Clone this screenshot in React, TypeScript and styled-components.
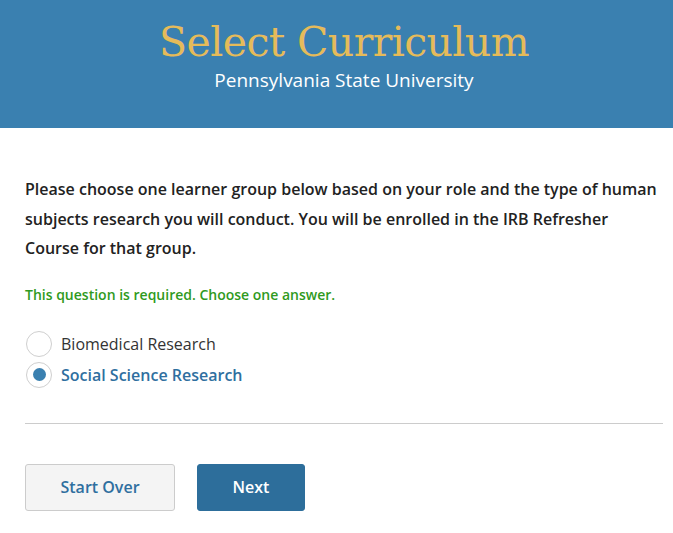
import React, { useState } from "react";
import styled, { createGlobalStyle } from "styled-components";

const Global = createGlobalStyle`
  html, body { margin: 0; padding: 0; background: #ffffff; }
  body { font-family: "Open Sans", "Liberation Sans", sans-serif; color: #222; }
  * { box-sizing: border-box; }
`;

const Header = styled.header`
  background: #3a80b0;
  height: 128px;
  display: flex;
  flex-direction: column;
  align-items: center;
  padding-top: 14px;
  padding-left: 15px;
`;

const Title = styled.h1`
  margin: 0;
  font-family: "DejaVu Serif", "Liberation Serif", serif;
  font-weight: 400;
  font-size: 41px;
  line-height: 56px;
  color: #e5bb5a;
  letter-spacing: -0.6px;
`;

const Subtitle = styled.div`
  font-size: 19px;
  line-height: 24px;
  color: #ffffff;
  margin-top: -2px;
`;

const Main = styled.main`
  padding: 47px 10px 0 25px;
`;

const Prompt = styled.p`
  margin: 0;
  font-size: 16px;
  font-weight: 600;
  line-height: 29.5px;
  color: #222;
  max-width: 637px;
`;

const Required = styled.div`
  margin-top: 21px;
  font-size: 14px;
  font-weight: 600;
  color: #2f9a21;
  line-height: 20px;
`;

const Options = styled.div`
  margin-top: 26px;
  display: flex;
  flex-direction: column;
  gap: 5px;
`;

const OptionRow = styled.label<{ $selected: boolean }>`
  display: flex;
  align-items: center;
  gap: 9px;
  height: 26px;
  cursor: pointer;
  font-size: 16px;
  font-weight: ${(p) => (p.$selected ? 600 : 400)};
  color: ${(p) => (p.$selected ? "#2f6f9f" : "#333")};
  margin-left: 1px;
`;

const Radio = styled.span<{ $checked: boolean }>`
  width: 26px;
  height: 26px;
  border-radius: 50%;
  border: 1px solid #cfcfcf;
  background: #fff;
  display: flex;
  align-items: center;
  justify-content: center;
  &::after {
    content: "";
    width: 13px;
    height: 13px;
    border-radius: 50%;
    background: #3a80b0;
    display: ${(p) => (p.$checked ? "block" : "none")};
  }
`;

const Divider = styled.hr`
  margin: 35px 0 0 0;
  border: none;
  border-top: 1px solid #cccccc;
  width: 638px;
`;

const Buttons = styled.div`
  display: flex;
  gap: 22px;
  margin-top: 40px;
`;

const Button = styled.button<{ $primary?: boolean }>`
  height: 47px;
  width: ${(p) => (p.$primary ? "108px" : "150px")};
  border-radius: 3px;
  font-family: "Open Sans", "Liberation Sans", sans-serif;
  font-size: 16px;
  font-weight: 600;
  cursor: pointer;
  border: 1px solid ${(p) => (p.$primary ? "#2d6e9b" : "#cccccc")};
  background: ${(p) => (p.$primary ? "#2d6e9b" : "#f4f4f4")};
  color: ${(p) => (p.$primary ? "#ffffff" : "#2f6f9f")};
`;

const options = ["Biomedical Research", "Social Science Research"];

export default function App() {
  const [selected, setSelected] = useState(1);
  return (
    <>
      <Global />
      <Header>
        <Title>Select Curriculum</Title>
        <Subtitle>Pennsylvania State University</Subtitle>
      </Header>
      <Main>
        <Prompt>
          Please choose one learner group below based on your role and the type of human
          subjects research you will conduct. You will be enrolled in the IRB Refresher
          Course for that group.
        </Prompt>
        <Required>This question is required. Choose one answer.</Required>
        <Options>
          {options.map((o, i) => (
            <OptionRow key={o} $selected={selected === i} onClick={() => setSelected(i)}>
              <Radio $checked={selected === i} />
              {o}
            </OptionRow>
          ))}
        </Options>
        <Divider />
        <Buttons>
          <Button>Start Over</Button>
          <Button $primary>Next</Button>
        </Buttons>
      </Main>
    </>
  );
}
